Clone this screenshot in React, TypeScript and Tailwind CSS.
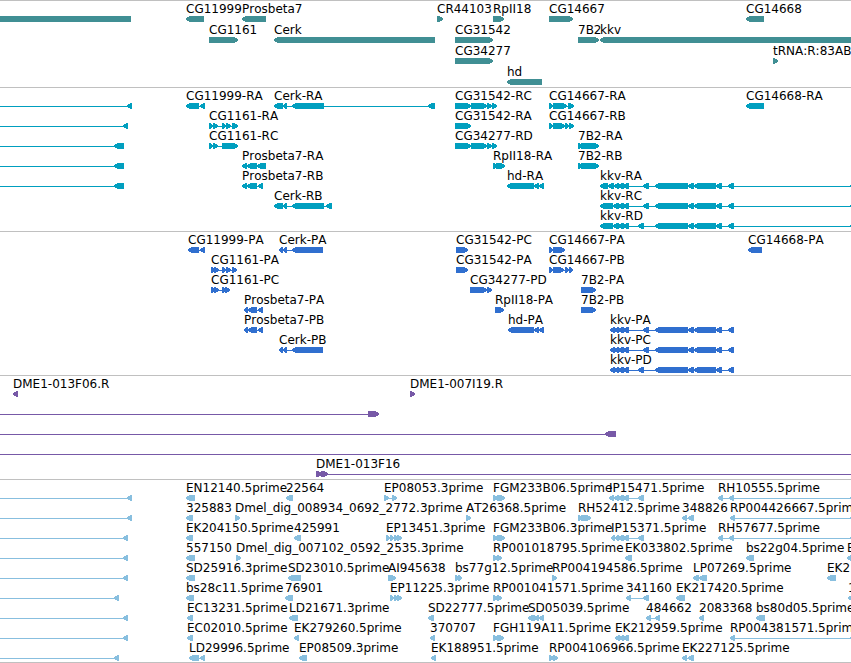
import clsx from 'clsx'

type Exon = [number, number]

interface Feature {
  label: string
  strand: '+' | '-'
  exons: Exon[]
  // extra reach of the intron line when the feature runs out of view
  from?: number
  to?: number
}

interface Track {
  name: string
  color: string
  rowHeight: string
  rows: Feature[][]
}

const LEFT = -10
const RIGHT = 2400
const HEAD = 5

const fwd = (label: string, ...exons: Exon[]): Feature => ({ label, strand: '+', exons })
const rev = (label: string, ...exons: Exon[]): Feature => ({ label, strand: '-', exons })
const fromLeft = (feature: Feature): Feature => ({ ...feature, from: LEFT })
const toRight = (feature: Feature): Feature => ({ ...feature, to: RIGHT })

const kkvTail: Exon[] = [[655, 688], [688, 694], [694, 716], [716, 722], [728, 734]]
const hdTail: Exon[] = [[534, 539], [539, 544]]
const offscreen: Exon = [850, 858]

const tracks: Track[] = [
  {
    name: 'Genes',
    color: 'text-[#408f94]',
    rowHeight: 'h-[21px]',
    rows: [
      [
        rev('', [LEFT, 131]),
        rev('CG11999', [186, 204]),
        rev('Prosbeta7', [242, 266]),
        fwd('CR44103', [437, 443]),
        fwd('RpII18', [493, 504]),
        fwd('CG14667', [549, 573]),
        rev('CG14668', [746, 764]),
      ],
      [
        fwd('CG1161', [209, 238]),
        rev('Cerk', [274, 435]),
        fwd('CG31542', [455, 493]),
        fwd('7B2', [578, 599]),
        rev('kkv', [600, RIGHT]),
      ],
      [fwd('CG34277', [455, 493]), fwd('tRNA:R:83AB', [773, 778])],
      [rev('hd', [507, 542])],
    ],
  },
  {
    name: 'Transcripts',
    color: 'text-[#009fbf]',
    rowHeight: 'h-5',
    rows: [
      [
        fromLeft(rev('', [127, 132])),
        rev('CG11999-RA', [186, 199], [200, 205]),
        rev('Cerk-RA', [274, 283], [283, 287], [292, 324], [428, 435]),
        fwd('CG31542-RC', [455, 471], [471, 487], [487, 492], [492, 497]),
        fwd('CG14667-RA', [549, 553], [553, 567], [568, 574]),
        rev('CG14668-RA', [746, 764]),
      ],
      [
        fromLeft(rev('', [123, 128])),
        fwd('CG1161-RA', [209, 213], [213, 218], [222, 226], [226, 231], [232, 238]),
        fwd('CG31542-RA', [455, 471]),
        fwd('CG14667-RB', [549, 553], [553, 565], [565, 569], [569, 574]),
      ],
      [
        fromLeft(rev('', [114, 124])),
        fwd('CG1161-RC', [209, 213], [213, 218], [222, 225], [224, 238]),
        fwd('CG34277-RD', [455, 471], [471, 487], [487, 492], [492, 497]),
        fwd('7B2-RA', [578, 582], [581, 599]),
      ],
      [
        fromLeft(rev('', [114, 124])),
        rev('Prosbeta7-RA', [242, 247], [247, 257], [257, 266]),
        fwd('RpII18-RA', [493, 497], [496, 505]),
        fwd('7B2-RB', [578, 582], [581, 599]),
      ],
      [
        fromLeft(rev('', [114, 124])),
        rev('Prosbeta7-RB', [242, 247], [247, 257], [258, 263]),
        rev('hd-RA', [507, 534], ...hdTail),
        toRight(rev('kkv-RA', [600, 608], [608, 614], [614, 619], [618, 624], [623, 629], [643, 649], ...kkvTail, offscreen)),
      ],
      [
        rev('Cerk-RB', [274, 283], [283, 287], [292, 324], [326, 332]),
        toRight(rev('kkv-RC', [600, 613], [613, 619], [618, 624], [623, 629], [643, 649], ...kkvTail, offscreen)),
      ],
      [
        toRight(rev('kkv-RD', [600, 613], [613, 619], [618, 624], [623, 629], [638, 644], ...kkvTail, offscreen)),
      ],
    ],
  },
  {
    name: 'Proteins',
    color: 'text-[#306fcf]',
    rowHeight: 'h-5',
    rows: [
      [
        rev('CG11999-PA', [188, 199], [200, 205]),
        rev('Cerk-PA', [279, 283], [283, 287], [292, 323]),
        fwd('CG31542-PC', [456, 468]),
        fwd('CG14667-PA', [549, 553], [553, 565]),
        rev('CG14668-PA', [748, 762]),
      ],
      [
        fwd('CG1161-PA', [211, 214], [214, 219], [222, 226], [226, 231], [232, 237]),
        fwd('CG31542-PA', [456, 468]),
        fwd('CG14667-PB', [549, 553], [553, 564], [565, 569], [569, 573]),
      ],
      [
        fwd('CG1161-PC', [211, 214], [214, 219], [222, 225], [225, 230]),
        fwd('CG34277-PD', [470, 487], [487, 492]),
        fwd('7B2-PA', [581, 596]),
      ],
      [
        rev('Prosbeta7-PA', [244, 248], [248, 257], [258, 263]),
        fwd('RpII18-PA', [495, 504]),
        fwd('7B2-PB', [581, 596]),
      ],
      [
        rev('Prosbeta7-PB', [244, 248], [248, 257], [258, 263]),
        rev('hd-PA', [508, 534], ...hdTail),
        rev('kkv-PA', [610, 615], [614, 619], [618, 624], [623, 629], [643, 649], ...kkvTail),
      ],
      [
        rev('Cerk-PB', [279, 283], [283, 287], [292, 323]),
        rev('kkv-PC', [610, 615], [614, 619], [618, 624], [623, 629], [643, 649], ...kkvTail),
      ],
      [
        rev('kkv-PD', [610, 615], [614, 619], [618, 624], [623, 629], [638, 644], ...kkvTail),
      ],
    ],
  },
  {
    name: 'Genomic clones',
    color: 'text-[#7759a7]',
    rowHeight: 'h-5',
    rows: [
      [rev('DME1-013F06.R', [13, 18]), fwd('DME1-007I19.R', [410, 415])],
      [fromLeft(fwd('', [368, 379]))],
      [fromLeft(rev('', [605, 616]))],
      [toRight(fromLeft(fwd('')))],
      [toRight(fwd('DME1-013F16', [316, 322], [321, 328]))],
    ],
  },
  {
    name: 'ESTs',
    color: 'text-[#88bfdf]',
    rowHeight: 'h-5',
    rows: [
      [
        fromLeft(rev('', [127, 132])),
        rev('EN12140.5prime', [186, 195]),
        rev('22564', [286, 293]),
        fwd('EP08053.3prime', [384, 389], [392, 397]),
        fwd('FGM233B06.5prime', [493, 498], [497, 505]),
        rev('IP15471.5prime', [609, 614], [614, 619], [618, 624], [623, 629], [638, 644]),
        toRight(rev('RH10555.5prime', [718, 723], [729, 734], offscreen)),
      ],
      [
        fromLeft(rev('', [127, 132])),
        rev('325883', [186, 193]),
        fwd('Dmel_dig_008934_0692_2772.3prime', [235, 240]),
        fwd('AT26368.5prime', [466, 471]),
        fwd('RH52412.5prime', [578, 582], [581, 591]),
        rev('348826', [682, 687], [688, 694]),
        toRight(rev('RP004426667.5prime', [730, 735], offscreen)),
      ],
      [
        fromLeft(rev('', [123, 128])),
        rev('EK204150.5prime', [186, 193]),
        rev('425991', [294, 301]),
        fwd('EP13451.3prime', [386, 390], [390, 394], [394, 398], [397, 402]),
        fwd('FGM233B06.3prime', [493, 498], [497, 505]),
        rev('IP15371.5prime', [611, 615], [615, 619], [618, 624], [623, 629], [638, 644]),
        toRight(rev('RH57677.5prime', [718, 723], [729, 734], offscreen)),
      ],
      [
        fromLeft(rev('', [123, 128])),
        rev('557150', [186, 195]),
        fwd('Dmel_dig_007102_0592_2535.3prime', [236, 241]),
        fwd('RP001018795.5prime', [493, 498], [497, 502]),
        rev('EK033802.5prime', [625, 632]),
        rev('bs22g04.5prime', [746, 754]),
        rev('E', [847, 856]),
      ],
      [
        fromLeft(rev('', [123, 128])),
        rev('SD25916.3prime', [186, 195]),
        rev('SD23010.5prime', [288, 301]),
        fwd('AI945638', [388, 396]),
        fwd('bs77g12.5prime', [455, 459], [458, 462]),
        fwd('RP004194586.5prime', [552, 557]),
        rev('LP07269.5prime', [693, 699], [699, 707]),
        rev('EK2', [827, 836]),
      ],
      [
        fromLeft(rev('', [114, 119])),
        rev('bs28c11.5prime', [186, 194]),
        rev('76901', [285, 293]),
        fwd('EP11225.3prime', [390, 394], [394, 398], [397, 402]),
        fwd('RP001041571.5prime', [493, 498], [497, 502]),
        rev('341160', [626, 631], [643, 649]),
        rev('EK217420.5prime', [676, 685]),
        rev('1', [848, 856]),
      ],
      [
        fromLeft(rev('', [123, 128])),
        rev('EC13231.5prime', [187, 193]),
        rev('LD21671.3prime', [289, 298]),
        rev('SD22777.5prime', [428, 434]),
        rev('SD05039.5prime', [528, 535], [534, 539], [539, 544]),
        rev('484662', [646, 651], [655, 660]),
        rev('2083368', [699, 704]),
        rev('bs80d05.5prime', [756, 765]),
      ],
      [
        fromLeft(rev('', [123, 128])),
        rev('EC02010.5prime', [187, 193]),
        rev('EK279260.5prime', [294, 299]),
        rev('370707', [430, 435]),
        fwd('FGH119A11.5prime', [493, 498], [497, 504]),
        rev('EK212959.5prime', [615, 620], [619, 624], [623, 629]),
        toRight(rev('RP004381571.5prime', [730, 735], offscreen)),
      ],
      [
        fromLeft(rev('', [114, 119])),
        rev('LD29996.5prime', [189, 199], [200, 205]),
        rev('EP08509.3prime', [299, 307]),
        rev('EK188951.5prime', [431, 436]),
        fwd('RP004106966.5prime', [549, 554], [553, 558]),
        rev('EK227125.5prime', [682, 687], [688, 694]),
      ],
    ],
  },
]

// blunt two-pixel tip, so short exons stay readable next to the intron line
const exonPoints = (start: number, end: number, strand: Feature['strand']) => {
  const head = Math.min(HEAD, end - start) - 1
  if (strand === '-') {
    return `${start},2 ${start + head},0 ${end},0 ${end},6 ${start + head},6 ${start},4`
  }
  return `${start},0 ${end - head},0 ${end},2 ${end},4 ${end - head},6 ${start},6`
}

function FeatureGlyph({ feature }: { feature: Feature }) {
  const { label, strand, exons } = feature
  const start = feature.from ?? exons[0][0]
  const end = feature.to ?? exons[exons.length - 1][1]

  return (
    <div className="absolute top-0" style={{ left: start }}>
      <div className="h-[14px] leading-[14px] whitespace-nowrap text-black">{label}</div>
      <svg className="block h-1.5" width={end - start} height={6} fill="currentColor" shapeRendering="crispEdges">
        <rect x={0} y={3} width={end - start} height={1} />
        {exons.map(([a, b], index) => (
          <polygon key={index} points={exonPoints(a - start, b - start, strand)} />
        ))}
      </svg>
    </div>
  )
}

export default function App() {
  return (
    <main className="w-full overflow-hidden bg-white border-b border-[#c0c0c0] font-['DejaVu_Sans',sans-serif] text-xs [font-kerning:none]">
      {tracks.map((track) => (
        <section
          key={track.name}
          aria-label={track.name}
          className={clsx('border-t border-[#c0c0c0] pt-px pb-0.5 first:pb-px last:pb-px', track.color)}
        >
          {track.rows.map((row, index) => (
            <div key={index} className={clsx('relative', track.rowHeight)}>
              {row.map((feature, i) => (
                <FeatureGlyph key={i} feature={feature} />
              ))}
            </div>
          ))}
        </section>
      ))}
    </main>
  )
}
